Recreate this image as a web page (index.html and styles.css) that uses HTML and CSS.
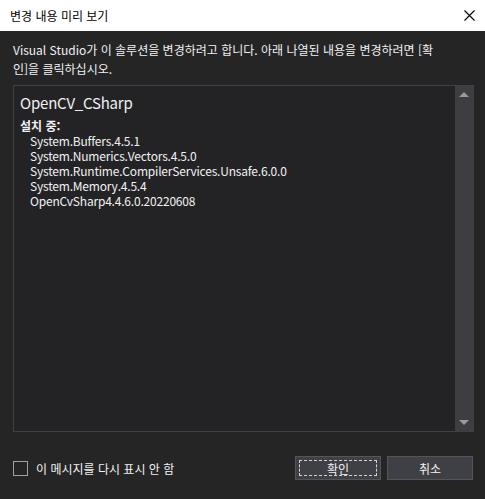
FILE: index.html
```html
<!DOCTYPE html>
<html lang="ko">
<head>
<meta charset="utf-8">
<link rel="stylesheet" href="styles.css">
</head>
<body>
<div class="dialog">
  <div class="titlebar">
    <span class="title">변경 내용 미리 보기</span>
    <svg class="close" width="11" height="11" viewBox="0 0 11 11"><path d="M0.5 0.5L10.5 10.5M10.5 0.5L0.5 10.5" stroke="#000" stroke-width="1.1" fill="none"/></svg>
  </div>
  <div class="body">
    <p class="desc">Visual Studio가 이 솔루션을 변경하려고 합니다. 아래 나열된 내용을 변경하려면 [확<br>인]을 클릭하십시오.</p>
    <div class="listbox">
      <div class="content">
        <div class="project">OpenCV_CSharp</div>
        <div class="section">설치 중:</div>
        <ul class="items">
          <li>System.Buffers.4.5.1</li>
          <li>System.Numerics.Vectors.4.5.0</li>
          <li>System.Runtime.CompilerServices.Unsafe.6.0.0</li>
          <li>System.Memory.4.5.4</li>
          <li>OpenCvSharp4.4.6.0.20220608</li>
        </ul>
      </div>
      <div class="scrollbar">
        <span class="arrow up"></span>
        <span class="arrow down"></span>
      </div>
    </div>
    <div class="footer">
      <label class="check"><span class="box"></span><span class="label">이 메시지를 다시 표시 안 함</span></label>
      <div class="buttons">
        <button class="btn primary"><span class="focus">확인</span></button>
        <button class="btn">취소</button>
      </div>
    </div>
  </div>
</div>
</body>
</html>
```
FILE: styles.css
```css
html, body {
  margin: 0;
  padding: 0;
  background: #252526;
}
body {
  font-family: "Noto Sans CJK KR", "Noto Sans", sans-serif;
  font-size: 12px;
  color: #f1f1f1;
}
.dialog {
  width: 485px;
  height: 499px;
  display: flex;
  flex-direction: column;
}
.titlebar {
  height: 31px;
  background: #ffffff;
  display: flex;
  align-items: center;
  justify-content: space-between;
  padding: 0 10px 0 10px;
  box-sizing: border-box;
  color: #000;
}
.title {
  font-size: 12px;
  line-height: 16px;
}
.close {
  display: block;
}
.body {
  flex: 1;
  padding: 9px 11px 0 13px;
  display: flex;
  flex-direction: column;
}
.desc {
  margin: 0;
  line-height: 19px;
  font-size: 12px;
  white-space: nowrap;
}
.listbox {
  margin-top: 7px;
  height: 347px;
  border: 1px solid #3f3f46;
  box-sizing: border-box;
  background: #232325;
  display: flex;
}
.content {
  flex: 1;
  padding: 6px 0 0 6px;
}
.project {
  font-size: 15px;
  line-height: 22px;
  letter-spacing: -0.2px;
}
.section {
  font-weight: bold;
  margin-top: 4px;
  line-height: 15px;
}
.items {
  list-style: none;
  margin: 0;
  padding: 0 0 0 10px;
}
.items li {
  line-height: 15px;
  letter-spacing: -0.2px;
}
.scrollbar {
  width: 18px;
  background: #3e3e42;
  display: flex;
  flex-direction: column;
  justify-content: space-between;
  align-items: center;
  padding: 6px 0;
  box-sizing: border-box;
}
.arrow {
  width: 0;
  height: 0;
  border-left: 5px solid transparent;
  border-right: 5px solid transparent;
}
.arrow.up {
  border-bottom: 5px solid #999999;
}
.arrow.down {
  border-top: 5px solid #999999;
}
.footer {
  margin-top: 24px;
  display: flex;
  align-items: center;
  justify-content: space-between;
}
.check {
  display: flex;
  align-items: center;
  gap: 8px;
}
.box {
  width: 13px;
  height: 13px;
  border: 1px solid #a0a0a0;
  display: block;
}
.label {
  color: #f1f1f1;
  font-size: 12px;
}
.buttons {
  display: flex;
  gap: 6px;
  margin-right: 1px;
}
.btn {
  width: 86px;
  height: 24px;
  background: #3f3f46;
  border: 1px solid #555555;
  color: #f1f1f1;
  font-family: inherit;
  font-size: 12px;
  padding: 0;
  display: flex;
  align-items: center;
  justify-content: center;
  box-sizing: border-box;
}
.btn.primary {
  padding: 3px;
}
.focus {
  flex: 1;
  align-self: stretch;
  border: 1px dashed #d0d0d0;
  display: flex;
  align-items: center;
  justify-content: center;
}
```
